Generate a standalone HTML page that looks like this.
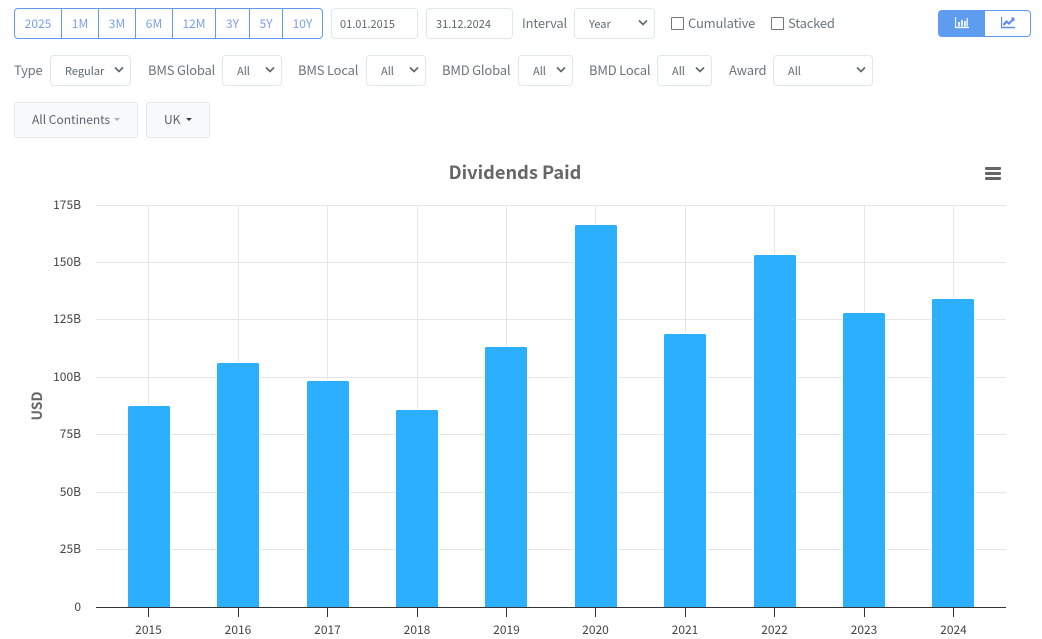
<!DOCTYPE html>
<html><head><meta charset="utf-8"><style>
html,body{margin:0;padding:0;background:#fff}
body{width:1042px;height:639px;position:relative;overflow:hidden;font-family:"Noto Sans CJK JP","Liberation Sans",sans-serif;color:#6c757d;font-size:14px}
.a{position:absolute;box-sizing:border-box}
.b{position:absolute;top:8px;height:31px;border:1px solid #5e9cf0;border-left:0;color:#7b9fe8;font-size:12px;line-height:30px;text-align:center;box-sizing:border-box;background:#fff}
.i{position:absolute;border:1px solid #dfe8ec;border-radius:4px;background:#fff;box-sizing:border-box;height:31px;font-size:11px;line-height:31px;color:#5b6670}
.i svg{position:absolute;top:10px;right:5px}
.l{position:absolute;line-height:20px;font-size:13px;letter-spacing:-.2px;color:#6c757d;white-space:nowrap}
.cb{position:absolute;top:17px;width:13px;height:13px;border:1px solid #767676;border-radius:1px;box-sizing:border-box;background:#fff}
.dd{position:absolute;top:102px;height:36px;background:#f8f9fa;border:1px solid #e2e8ec;border-radius:3px;box-sizing:border-box;font-size:12px;color:#5a6570;line-height:34px}
.car{position:absolute;top:15px;width:0;height:0;border-left:3.5px solid transparent;border-right:3.5px solid transparent;border-top:3.5px solid #5a6570}
</style></head><body>
<div class="b" style="left:14px;width:48px;border-left:1px solid #5e9cf0;border-radius:4px 0 0 4px">2025</div>
<div class="b" style="left:62px;width:37px">1M</div>
<div class="b" style="left:99px;width:37px">3M</div>
<div class="b" style="left:136px;width:37px">6M</div>
<div class="b" style="left:173px;width:43px">12M</div>
<div class="b" style="left:216px;width:34px">3Y</div>
<div class="b" style="left:250px;width:33px">5Y</div>
<div class="b" style="left:283px;width:40px;border-radius:0 4px 4px 0">10Y</div>

<div class="i" style="left:331px;top:8px;width:87px;padding-left:8px">01.01.2015</div>
<div class="i" style="left:426px;top:8px;width:87px;padding-left:9px">31.12.2024</div>
<div class="l" style="left:522px;top:13px">Interval</div>
<div class="i" style="left:574px;top:8px;width:81px;padding-left:14px">Year<svg width="12" height="8" viewBox="0 0 12 8"><path d="M2 1.500l4 4 4-4" fill="none" stroke="#5b6670" stroke-width="1.600"/></svg></div>
<div class="cb" style="left:671px"></div><div class="l" style="left:688px;top:13px">Cumulative</div>
<div class="cb" style="left:771px"></div><div class="l" style="left:788px;top:13px">Stacked</div>

<div class="a" style="left:938px;top:10px;width:47px;height:27px;background:#5e9cf0;border-radius:4px 0 0 4px"></div>
<div class="a" style="left:985px;top:10px;width:46px;height:27px;border:1px solid #5e9cf0;border-left:0;border-radius:0 4px 4px 0"></div>
<svg class="a" style="left:955px;top:17px" width="14" height="12" viewBox="0 0 14 12"><path d="M.5 0v10.500H14" fill="none" stroke="#fff" stroke-width="1.200"/><path d="M3 5h2v4.500H3zM6 3h2v6.500H6zM9 4h2v5.500H9zM11.500 1h1.500v8.500h-1.500z" fill="#fff" opacity=".85"/></svg>
<svg class="a" style="left:1001px;top:17px" width="14" height="12" viewBox="0 0 14 12"><path d="M.5 0v10.500H14" fill="none" stroke="#5e8fe0" stroke-width="1.400"/><path d="M2.500 8L5.500 4.500 8 6.500 12 2.500" fill="none" stroke="#5e8fe0" stroke-width="2.200"/><path d="M9.500 .5h4v4z" fill="#5e8fe0"/></svg>

<div class="l" style="left:14px;top:60px">Type</div>
<div class="i" style="left:50px;top:55px;width:81px;padding-left:14px">Regular<svg width="12" height="8" viewBox="0 0 12 8"><path d="M2 1.500l4 4 4-4" fill="none" stroke="#5b6670" stroke-width="1.600"/></svg></div>
<div class="l" style="left:148px;top:60px">BMS Global</div>
<div class="i" style="left:222px;top:55px;width:60px;padding-left:14px">All<svg width="12" height="8" viewBox="0 0 12 8"><path d="M2 1.500l4 4 4-4" fill="none" stroke="#5b6670" stroke-width="1.600"/></svg></div>
<div class="l" style="left:298px;top:60px">BMS Local</div>
<div class="i" style="left:366px;top:55px;width:60px;padding-left:14px">All<svg width="12" height="8" viewBox="0 0 12 8"><path d="M2 1.500l4 4 4-4" fill="none" stroke="#5b6670" stroke-width="1.600"/></svg></div>
<div class="l" style="left:442px;top:60px">BMD Global</div>
<div class="i" style="left:518px;top:55px;width:55px;padding-left:14px">All<svg width="12" height="8" viewBox="0 0 12 8"><path d="M2 1.500l4 4 4-4" fill="none" stroke="#5b6670" stroke-width="1.600"/></svg></div>
<div class="l" style="left:589px;top:60px">BMD Local</div>
<div class="i" style="left:657px;top:55px;width:55px;padding-left:14px">All<svg width="12" height="8" viewBox="0 0 12 8"><path d="M2 1.500l4 4 4-4" fill="none" stroke="#5b6670" stroke-width="1.600"/></svg></div>
<div class="l" style="left:729px;top:60px">Award</div>
<div class="i" style="left:773px;top:55px;width:100px;padding-left:14px">All<svg width="12" height="8" viewBox="0 0 12 8"><path d="M2 1.500l4 4 4-4" fill="none" stroke="#5b6670" stroke-width="1.600"/></svg></div>

<div class="dd" style="left:14px;width:124px;padding-left:17px">All Continents<span class="car" style="left:99px;border-top-color:#aab1b7"></span></div>
<div class="dd" style="left:146px;width:64px;padding-left:17px">UK<span class="car" style="left:39px;border-top-color:#343a40"></span></div>

<svg class="a" style="left:0;top:0" width="1042" height="639" viewBox="0 0 1042 639" font-family="'Noto Sans CJK JP','Liberation Sans',sans-serif">
<text x="515" y="179" text-anchor="middle" font-size="18.200" font-weight="700" fill="#666">Dividends Paid</text>
<g fill="#666"><rect x="985" y="167" width="16" height="3" rx="1"/><rect x="985" y="172" width="16" height="3" rx="1"/><rect x="985" y="177" width="16" height="3" rx="1"/></g>
<g stroke="#e6e6e6" stroke-width="1" fill="none">
<path d="M96 205.500H1006M96 262.500H1006M96 319.500H1006M96 377.500H1006M96 434.500H1006M96 492.500H1006M96 549.500H1006"/>
<path d="M148.500 205V607M238.500 205V607M327.500 205V607M417.500 205V607M506.500 205V607M595.500 205V607M685.500 205V607M774.500 205V607M864.500 205V607M953.500 205V607"/>
</g>
<g fill="#2caffe" stroke="#fff" stroke-width="1" transform="translate(0,-.5)">
<path d="M127.500 608V408a2 2 0 0 1 2-2h39a2 2 0 0 1 2 2V608z"/>
<path d="M216.500 608V365a2 2 0 0 1 2-2h39a2 2 0 0 1 2 2V608z"/>
<path d="M306.500 608V383a2 2 0 0 1 2-2h39a2 2 0 0 1 2 2V608z"/>
<path d="M395.500 608V412a2 2 0 0 1 2-2h39a2 2 0 0 1 2 2V608z"/>
<path d="M484.500 608V349a2 2 0 0 1 2-2h39a2 2 0 0 1 2 2V608z"/>
<path d="M574.500 608V227a2 2 0 0 1 2-2h39a2 2 0 0 1 2 2V608z"/>
<path d="M663.500 608V336a2 2 0 0 1 2-2h39a2 2 0 0 1 2 2V608z"/>
<path d="M753.500 608V257a2 2 0 0 1 2-2h39a2 2 0 0 1 2 2V608z"/>
<path d="M842.500 608V315a2 2 0 0 1 2-2h39a2 2 0 0 1 2 2V608z"/>
<path d="M931.500 608V301a2 2 0 0 1 2-2h39a2 2 0 0 1 2 2V608z"/>
</g>
<path d="M96 607.500H1006M148.500 608v9M238.500 608v9M327.500 608v9M417.500 608v9M506.500 608v9M595.500 608v9M685.500 608v9M774.500 608v9M864.500 608v9M953.500 608v9" stroke="#333" stroke-width="1" fill="none"/>
<g font-size="12" fill="#444" text-anchor="end">
<text x="81" y="209">175B</text><text x="81" y="266">150B</text><text x="81" y="323">125B</text><text x="81" y="381">100B</text><text x="81" y="438">75B</text><text x="81" y="496">50B</text><text x="81" y="553">25B</text><text x="81" y="611">0</text>
</g>
<g font-size="12" fill="#444" text-anchor="middle">
<text x="148.500" y="634">2015</text><text x="238" y="634">2016</text><text x="327.500" y="634">2017</text><text x="417" y="634">2018</text><text x="506.500" y="634">2019</text><text x="595.500" y="634">2020</text><text x="685" y="634">2021</text><text x="774.500" y="634">2022</text><text x="864" y="634">2023</text><text x="953.500" y="634">2024</text>
</g>
<text transform="translate(42,406) rotate(-90)" text-anchor="middle" font-size="14" font-weight="700" fill="#666">USD</text>
</svg>
</body></html>
